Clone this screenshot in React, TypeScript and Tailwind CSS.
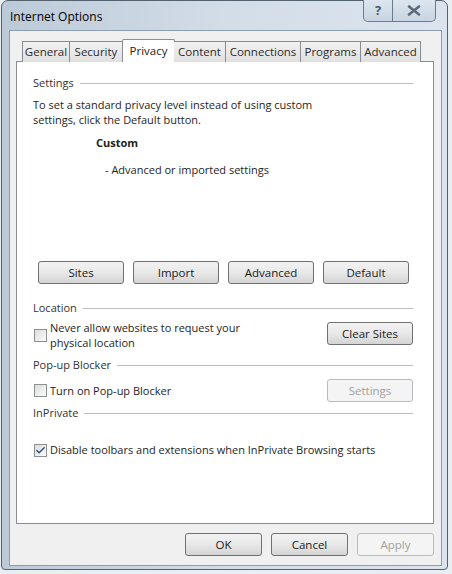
import { Check } from 'lucide-react';

const font = { fontFamily: '"Open Sans", "Noto Sans", sans-serif' };

const tabs = [
  { label: 'General', w: 'w-[48px]' },
  { label: 'Security', w: 'w-[53px]' },
  { label: 'Privacy', w: 'w-[53px]', active: true },
  { label: 'Content', w: 'w-[52px]' },
  { label: 'Connections', w: 'w-[75px]' },
  { label: 'Programs', w: 'w-[60px]' },
  { label: 'Advanced', w: 'w-[60px]' },
];

const Btn = ({ label, w = 'w-[86px]', disabled = false }: { label: string; w?: string; disabled?: boolean }) => (
  <button
    className={`${w} h-[23px] rounded-[3px] border text-[11.5px] leading-none ${
      disabled
        ? 'border-[#b8bcc0] bg-[#f4f4f4] text-[#a0a0a0]'
        : 'border-[#707070] bg-gradient-to-b from-[#f3f3f3] via-[#e8e8e8] to-[#d4d4d4] text-[#1a1a1a]'
    }`}
  >
    {label}
  </button>
);

const Box = ({ checked = false }: { checked?: boolean }) => (
  <span className="w-[13px] h-[13px] shrink-0 border border-[#8e8f8f] bg-gradient-to-br from-[#dcdcdc] to-[#fbfbfb] flex items-center justify-center">
    {checked && <Check size={11} strokeWidth={3} className="text-[#2d4f86]" />}
  </span>
);

const Group = ({ label }: { label: string }) => (
  <div className="flex items-center gap-[6px] h-[16px]">
    <span className="text-[#333]">{label}</span>
    <span className="flex-1 h-px bg-[#b9bdc2]" />
  </div>
);

export default function App() {
  return (
    <div className="w-[452px] h-[574px] bg-[#e9eef3] overflow-hidden" style={font}>
      <div className="ml-[1px] w-[447px] h-[570px] flex flex-col border border-[#54616f] rounded-t-[7px] rounded-b-[4px] bg-gradient-to-r from-[#bccad8] via-[#d3dde8] to-[#dbe4ee]">
        {/* Title bar */}
        <div className="h-[29px] flex items-start justify-between">
          <span className="pl-[8px] pt-[7px] text-[12px] text-black">Internet Options</span>
          <div className="flex mr-[11px] -mt-px">
            <div className="w-[30px] h-[22px] border border-[#6b7a8c] border-t-0 rounded-bl-[5px] bg-gradient-to-b from-[#dde6ef] to-[#c8d4e1] flex items-center justify-center text-[#4a5a6c] text-[13px] font-bold">
              ?
            </div>
            <div className="w-[43px] h-[22px] border border-l-0 border-[#6b7a8c] border-t-0 rounded-br-[5px] bg-gradient-to-b from-[#dde6ef] to-[#c8d4e1] flex items-center justify-center">
              <svg width="14" height="11" viewBox="0 0 14 11">
                <path d="M2 1.5 L12 9.5 M12 1.5 L2 9.5" stroke="#5c6b7c" strokeWidth="2.6" strokeLinecap="round" />
              </svg>
            </div>
          </div>
        </div>

        {/* Body */}
        <div className="ml-[7px] w-[433px] h-[536px] border border-[#8d9db0] bg-[#f0f0f0] flex flex-col pl-[6px] text-[11px] text-[#1e1e1e]">
          {/* Tabs */}
          <div className="flex items-end h-[31px] pl-[6px] -mb-px relative z-10 text-[11.5px]">
            {tabs.map(t =>
              t.active ? (
                <div
                  key={t.label}
                  className={`${t.w} h-[23px] -mx-[1px] border border-b-0 border-[#898c95] bg-white flex justify-center pt-[2px] rounded-t-[2px]`}
                >
                  {t.label}
                </div>
              ) : (
                <div
                  key={t.label}
                  className={`${t.w} h-[21px] border border-b-0 border-l-0 first:border-l border-[#898c95] bg-gradient-to-b from-[#f2f2f2] to-[#e0e0e0] flex items-center justify-center text-[#2b2b2b]`}
                >
                  {t.label}
                </div>
              )
            )}
          </div>

          {/* Panel */}
          <div className="w-[418px] h-[463px] border border-[#898c95] bg-white flex flex-col pl-[16px] pr-[20px] pt-[13px] leading-[16px]">
            <Group label="Settings" />
            <p className="mt-[6px] leading-[15px]">
              To set a standard privacy level instead of using custom
              <br />
              settings, click the Default button.
            </p>
            <div className="mt-[8px] ml-[63px] font-bold">Custom</div>
            <div className="mt-[11px] ml-[72px]">- Advanced or imported settings</div>

            <div className="mt-[83px] ml-[5px] flex gap-[9px]">
              <Btn label="Sites" />
              <Btn label="Import" />
              <Btn label="Advanced" />
              <Btn label="Default" />
            </div>

            <div className="mt-[16px]">
              <Group label="Location" />
            </div>
            <div className="mt-[4px] flex items-start justify-between">
              <div className="flex items-center gap-[3px] ml-[1px]">
                <Box />
                <span className="leading-[15px]">
                  Never allow websites to request your
                  <br />
                  physical location
                </span>
              </div>
              <div className="mt-[2px]">
                <Btn label="Clear Sites" />
              </div>
            </div>

            <div className="mt-[7px]">
              <Group label="Pop-up Blocker" />
            </div>
            <div className="mt-[6px] h-[23px] flex items-center justify-between">
              <div className="flex items-center gap-[3px] ml-[1px]">
                <Box />
                <span>Turn on Pop-up Blocker</span>
              </div>
              <Btn label="Settings" disabled />
            </div>

            <div className="mt-[3px]">
              <Group label="InPrivate" />
            </div>
            <div className="mt-[21px] flex items-center gap-[3px] ml-[1px]">
              <Box checked />
              <span>Disable toolbars and extensions when InPrivate Browsing starts</span>
            </div>
          </div>

          {/* Footer */}
          <div className="mt-[9px] w-[418px] flex justify-end gap-[9px]">
            <Btn label="OK" w="w-[77px]" />
            <Btn label="Cancel" w="w-[77px]" />
            <Btn label="Apply" w="w-[77px]" disabled />
          </div>
        </div>
      </div>
    </div>
  );
}
